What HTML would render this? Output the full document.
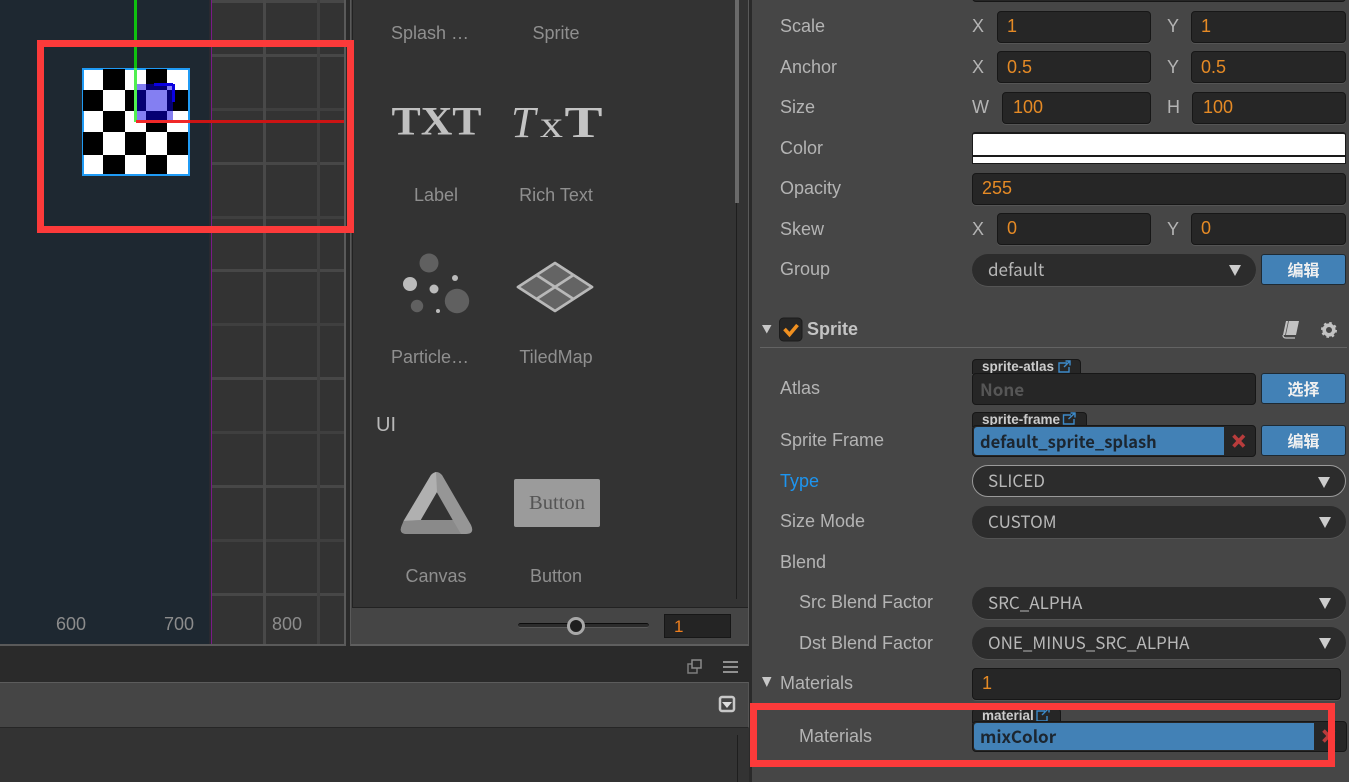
<!DOCTYPE html>
<html><head><meta charset="utf-8"><style>
*{box-sizing:border-box}
html,body{margin:0;padding:0;width:1349px;height:782px;overflow:hidden;background:#2a2a2a;font-family:"Liberation Sans","Noto Sans CJK SC",sans-serif}
#r{position:relative;width:1349px;height:782px;overflow:hidden}
.a{position:absolute}
.l{position:absolute;font-size:18px;line-height:24px;color:#b4b4b4;white-space:nowrap}
.c{position:absolute;font-size:18px;line-height:24px;color:#8f8f8f;white-space:nowrap;text-align:center;width:120px}
.i{position:absolute;background:#262626;border:1px solid #171717;border-radius:4px;height:32px;color:#e58a25;font-size:18px;line-height:29px;padding-left:9px;box-shadow:0 1px 0 #555}
.s{position:absolute;left:972px;width:374px;height:32px;background:#2c2c2c;border-radius:16px;color:#b8b8b8;font:17px/30px "Noto Sans CJK SC",sans-serif;padding-left:16px;box-shadow:0 1px 0 #555}
.s:after{content:"";position:absolute;right:15px;top:11px;border-left:6px solid transparent;border-right:6px solid transparent;border-top:11px solid #ccc}
.b{position:absolute;left:1261px;width:85px;background:#4281b6;border:1px solid #1e2a33;border-radius:3px;color:#f0f0f0;font-size:16px;font-weight:bold;text-align:center;line-height:33px;height:32px}
.tab{position:absolute;left:972px;background:#262626;border:1px solid #171717;border-bottom:none;border-radius:4px 4px 0 0;height:15px;color:#ccc;font-size:13.5px;font-weight:bold;line-height:14px;padding-left:9px;white-space:nowrap}
.f{position:absolute;left:972px;background:#262626;border:1px solid #171717;border-radius:4px;height:32px}
.bl{position:absolute;left:1px;top:1px;bottom:1px;background:#4281b6;color:#1c2630;font:bold 16.5px/29px "Noto Sans CJK SC",sans-serif;padding-left:6px;border-radius:3px 0 0 3px;white-space:nowrap}
.gh{position:absolute;left:212px;width:132px;height:3px;background:#474747}
.gh.d{background:#3f3f3f}
.gv{position:absolute;top:0;height:644px;width:3px;background:#494949}
.ck{position:absolute;width:22px;height:21px;background:#000}
</style></head><body><div id="r">

<!-- scene -->
<div class="a" style="left:0;top:0;width:346px;height:646px;background:#333"></div>
<div class="a" style="left:0;top:0;width:209px;height:644px;background:#1e2831"></div>
<div class="a" style="left:209px;top:0;width:2px;height:644px;background:#2a2a30"></div>
<div class="gh" style="top:0"></div><div class="gh" style="top:54px"></div><div class="gh d" style="top:108px"></div><div class="gh" style="top:162px"></div><div class="gh d" style="top:216px"></div><div class="gh" style="top:269px"></div><div class="gh d" style="top:323px"></div><div class="gh" style="top:377px"></div><div class="gh d" style="top:431px"></div><div class="gh" style="top:485px"></div><div class="gh d" style="top:539px"></div><div class="gh" style="top:593px"></div>
<div class="gv" style="left:263px"></div><div class="gv" style="left:317px;background:#404040"></div>
<div class="a" style="left:211px;top:0;width:1px;height:644px;background:#7a1a86"></div>
<div class="a" style="left:344px;top:0;width:2px;height:646px;background:#5a5a5a"></div>
<div class="a" style="left:346px;top:0;width:4px;height:646px;background:#2a2a2a"></div>
<div class="a" style="left:0;top:644px;width:346px;height:2px;background:#5a5a5a"></div>
<div class="c" style="left:11px;top:612px;color:#8c8c8c">600</div>
<div class="c" style="left:119px;top:612px;color:#8c8c8c">700</div>
<div class="c" style="left:227px;top:612px;color:#8c8c8c">800</div>

<!-- sprite -->
<div class="a" style="left:82px;top:68px;width:108px;height:108px;background:#fff;border:2px solid #1f9bf5"></div>
<div class="ck" style="left:103px;top:69px"></div><div class="ck" style="left:146px;top:69px;width:21px"></div>
<div class="ck" style="left:83px;top:90px;width:20px"></div><div class="ck" style="left:125px;top:90px;width:21px"></div><div class="ck" style="left:167px;top:90px;width:21px"></div>
<div class="ck" style="left:103px;top:111px"></div><div class="ck" style="left:146px;top:111px;width:21px"></div>
<div class="ck" style="left:83px;top:132px;height:23px;width:20px"></div><div class="ck" style="left:125px;top:132px;height:23px;width:21px"></div><div class="ck" style="left:167px;top:132px;height:23px;width:21px"></div>
<div class="ck" style="left:103px;top:155px;height:19px"></div><div class="ck" style="left:146px;top:155px;height:19px;width:21px"></div>
<div class="a" style="left:136px;top:84px;width:37px;height:38px;background:rgba(10,0,230,.5)"></div>
<div class="a" style="left:154px;top:83px;width:19px;height:3px;background:#0a00e0"></div>
<div class="a" style="left:172px;top:84px;width:3px;height:18px;background:#0a00e0"></div>
<div class="a" style="left:134px;top:0;width:3px;height:122px;background:#0fc00f"></div>
<div class="a" style="left:134px;top:68px;width:3px;height:54px;background:#50f050"></div>
<div class="a" style="left:136px;top:120px;width:208px;height:3px;background:#cc1414"></div>
<div class="a" style="left:136px;top:120px;width:54px;height:3px;background:#f02828"></div>

<!-- assets panel -->
<div class="a" style="left:350px;top:0;width:399px;height:646px;background:#454545;border-left:1px solid #5a5a5a;border-right:1px solid #5a5a5a;border-bottom:2px solid #5f5f5f"></div>
<div class="a" style="left:352px;top:0;width:396px;height:608px;background:#333;border-left:1px solid #222;border-bottom:1px solid #222"></div>
<div class="a" style="left:736px;top:0;width:1px;height:599px;background:#1e1e1e"></div>
<div class="a" style="left:735px;top:0;width:4px;height:203px;background:#6a6a6a"></div>
<div class="a" style="left:37px;top:40px;width:317px;height:193px;border:7px solid #fc3a3a"></div>

<div class="c" style="left:370px;top:21px">Splash …</div>
<div class="c" style="left:496px;top:21px">Sprite</div>
<div class="c" style="left:376px;top:183px">Label</div>
<div class="c" style="left:496px;top:183px">Rich Text</div>
<div class="c" style="left:370px;top:345px">Particle…</div>
<div class="c" style="left:496px;top:345px">TiledMap</div>
<div class="l" style="left:376px;top:413px;font-size:20px;color:#b8b8b8">UI</div>
<div class="c" style="left:376px;top:564px">Canvas</div>
<div class="c" style="left:496px;top:564px">Button</div>

<svg class="a" style="left:352px;top:0" width="396" height="600" viewBox="352 0 396 600">
<text x="391.500" y="134.500" font-family="Liberation Serif,serif" font-weight="bold" font-size="40" fill="#c0c0c0" textLength="90" lengthAdjust="spacingAndGlyphs">TXT</text>
<text x="511" y="137" font-family="Liberation Serif,serif" font-style="italic" font-size="44" fill="#c4c4c4">T</text>
<text x="540" y="137" font-family="Liberation Serif,serif" font-size="38" fill="#c4c4c4" textLength="23" lengthAdjust="spacingAndGlyphs">x</text>
<text x="564.500" y="137" font-family="Liberation Serif,serif" font-weight="bold" font-size="44" fill="#c4c4c4" textLength="38" lengthAdjust="spacingAndGlyphs">T</text>
<circle cx="429" cy="263" r="9.500" fill="#606060"/><circle cx="410" cy="284" r="7" fill="#bbb"/><circle cx="434" cy="289" r="4.500" fill="#bbb"/><circle cx="455" cy="278" r="3" fill="#bbb"/><circle cx="457" cy="301" r="12.200" fill="#606060"/><circle cx="417" cy="306" r="6.200" fill="#606060"/><circle cx="438" cy="311" r="2" fill="#bbb"/>
<path d="M555 263L592 287L555 311L518 287Z" fill="#646464" stroke="#b8b8b8" stroke-width="2.800" stroke-linejoin="round"/>
<path d="M536.500 275L573.500 299M573.500 275L536.500 299" stroke="#b8b8b8" stroke-width="2.800"/>
<path fill-rule="evenodd" d="M431 475Q436.500 469 442 475L471 525Q475 534 466 534H407Q398 534 402 525ZM436.700 492L420.700 520H452.700Z" fill="#969696"/>
<path d="M431 475Q433 473 436 472L437 492L420.700 520L403.500 521Z" fill="#b0b0b0"/>
<path d="M403.500 521L420.700 520H452.700L461 534H407Q398 534 402 525Z" fill="#8a8a8a"/>
<rect x="514" y="479" width="86" height="48" rx="2" fill="#9b9b9b"/>
<text x="557" y="509" text-anchor="middle" font-family="Liberation Serif,serif" font-size="20" fill="#555" textLength="56" lengthAdjust="spacingAndGlyphs">Button</text>
</svg>

<div class="a" style="left:518px;top:623px;width:131px;height:5px;background:#2b2b2b;border-top:1px solid #0c0c0c;border-bottom:1px solid #5a5a5a;border-radius:3px"></div>
<div class="a" style="left:567px;top:617px;width:18px;height:18px;border-radius:50%;background:#1f1f1f;border:3px solid #a8a8a8"></div>
<div class="i" style="left:664px;top:614px;width:67px;height:24px;line-height:24px;border-radius:0;background:#242424;font-size:17px;color:#ef7f1e;box-shadow:none">1</div>

<!-- bottom -->
<div class="a" style="left:0;top:682px;width:749px;height:46px;background:#454545;border-top:1px solid #5c5c5c;border-bottom:1px solid #262626;border-right:1px solid #555"></div>
<div class="a" style="left:0;top:728px;width:749px;height:54px;background:#333"></div>
<div class="a" style="left:737px;top:735px;width:1px;height:47px;background:#1e1e1e"></div>
<svg class="a" style="left:685px;top:657px" width="60" height="60" viewBox="685 657 60 60">
<rect x="688" y="664" width="9" height="9" fill="none" stroke="#7d7d7d" stroke-width="1.500"/><rect x="692" y="660" width="9" height="8" fill="#2a2a2a" stroke="#8a8a8a" stroke-width="1.500"/>
<path d="M723 662H738M723 667H738M723 672H738" stroke="#909090" stroke-width="2"/>
<rect x="720" y="697" width="14" height="14" rx="2" fill="#444" stroke="#c8c8c8" stroke-width="2.500"/><path d="M722 702H732L727 708Z" fill="#ddd"/>
</svg>

<!-- inspector -->
<div class="a" style="left:750px;top:0;width:599px;height:782px;background:#464646;border-left:2px solid #2a2a2a"></div>
<div class="a" style="left:972px;top:-30px;width:374px;height:32px;background:#262626;border:1px solid #171717;border-radius:4px"></div>

<div class="l" style="left:780px;top:14px">Scale</div>
<div class="l" style="left:780px;top:55px">Anchor</div>
<div class="l" style="left:780px;top:95px">Size</div>
<div class="l" style="left:780px;top:136px">Color</div>
<div class="l" style="left:780px;top:176px">Opacity</div>
<div class="l" style="left:780px;top:217px">Skew</div>
<div class="l" style="left:780px;top:257px">Group</div>

<div class="l" style="left:972px;top:14px">X</div><div class="l" style="left:1167px;top:14px">Y</div>
<div class="l" style="left:972px;top:55px">X</div><div class="l" style="left:1167px;top:55px">Y</div>
<div class="l" style="left:972px;top:95px">W</div><div class="l" style="left:1167px;top:95px">H</div>
<div class="l" style="left:972px;top:217px">X</div><div class="l" style="left:1167px;top:217px">Y</div>

<div class="i" style="left:997px;top:11px;width:154px">1</div><div class="i" style="left:1191px;top:11px;width:155px">1</div>
<div class="i" style="left:997px;top:51px;width:154px;line-height:30px">0.5</div><div class="i" style="left:1191px;top:51px;width:155px;line-height:30px">0.5</div>
<div class="i" style="left:1002px;top:92px;width:149px;padding-left:10px">100</div><div class="i" style="left:1192px;top:92px;width:154px;padding-left:10px">100</div>
<div class="a" style="left:972px;top:132px;width:374px;height:32px;background:#fff;border:1px solid #1a1a1a;border-radius:3px 3px 0 0;border-width:2px 1px 1px"><div class="a" style="left:0;right:0;top:21px;height:2px;background:#1a1a1a"></div></div>
<div class="i" style="left:972px;top:173px;width:374px">255</div>
<div class="i" style="left:997px;top:213px;width:154px">0</div><div class="i" style="left:1191px;top:213px;width:155px">0</div>
<div class="s" style="top:254px;width:284px">default</div>
<div class="b" style="top:254px;height:31px">编辑</div>

<!-- sprite header -->
<svg class="a" style="left:760px;top:315px" width="50" height="30" viewBox="760 315 50 30">
<path d="M762 325H771.500L766.800 333.500Z" fill="#c8c8c8"/>
<rect x="779.500" y="318" width="22.500" height="23" rx="4" fill="#262626" stroke="#1c1c1c"/>
<path d="M784.500 329L789.500 334.500L797.500 325" fill="none" stroke="#f09020" stroke-width="3.600"/>
</svg>
<div class="l" style="left:807px;top:317px;font-weight:bold;color:#c4c4c4">Sprite</div>
<svg class="a" style="left:1280px;top:318px" width="60" height="24" viewBox="1280 318 60 24">
<path d="M1286 321H1299L1296 335H1283Z" fill="#c2c2c2"/><path d="M1288.500 321L1285.500 335" stroke="#555" stroke-width=".8"/><path d="M1283 335Q1283 338 1286 338H1295" fill="none" stroke="#c2c2c2" stroke-width="1.200"/>
<circle cx="1329" cy="330" r="4.800" fill="none" stroke="#c2c2c2" stroke-width="3.600"/><circle cx="1329" cy="330" r="7" fill="none" stroke="#c2c2c2" stroke-width="2" stroke-dasharray="2.600 2.900"/>
</svg>
<div class="a" style="left:760px;top:347px;width:587px;height:1px;background:#636363"></div>

<!-- atlas -->
<div class="l" style="left:780px;top:376px">Atlas</div>
<div class="tab" style="top:359px;width:109px">sprite-atlas</div>
<div class="f" style="top:373px;width:284px"><span class="a" style="left:7px;top:0;font:bold 17px/29px 'Noto Sans CJK SC',sans-serif;color:#565656">None</span></div>
<div class="b" style="top:373px;height:31px">选择</div>

<div class="l" style="left:780px;top:428px">Sprite Frame</div>
<div class="tab" style="top:412px;width:115px">sprite-frame</div>
<div class="f" style="top:425px;width:284px"><div class="bl" style="width:250px">default_sprite_splash</div></div>
<svg class="a" style="left:1230px;top:433px" width="18" height="16" viewBox="0 0 18 16"><path d="M3.500 2.500L14 13.500M14 2.500L3.500 13.500" stroke="#b83c3c" stroke-width="3.600"/></svg>
<div class="b" style="top:425px;height:31px">编辑</div>

<svg class="a" style="left:1055px;top:359px" width="40" height="70" viewBox="1055 359 40 70">
<path d="M1067 363H1059V372H1069V367M1064 367L1070 361M1065.500 361H1070V365.500" fill="none" stroke="#3d8ac9" stroke-width="1.400"/>
<path d="M1071 415H1063.500V424H1074V419M1068.500 419L1075 413M1070.500 413H1075V417.500" fill="none" stroke="#3d8ac9" stroke-width="1.400"/>
</svg>

<div class="l" style="left:780px;top:469px;color:#1d95f0">Type</div>
<div class="s" style="top:465px;border:1px solid #9a9a9a;line-height:28px;padding-left:15px;box-shadow:none">SLICED</div>
<div class="l" style="left:780px;top:509px">Size Mode</div>
<div class="s" style="top:506px">CUSTOM</div>
<div class="l" style="left:780px;top:550px">Blend</div>
<div class="l" style="left:799px;top:590px">Src Blend Factor</div>
<div class="s" style="top:587px">SRC_ALPHA</div>
<div class="l" style="left:799px;top:631px">Dst Blend Factor</div>
<div class="s" style="top:627px">ONE_MINUS_SRC_ALPHA</div>

<svg class="a" style="left:760px;top:674px" width="16" height="16" viewBox="0 0 16 16"><path d="M2 3H11.500L6.800 13Z" fill="#c8c8c8"/></svg>
<div class="l" style="left:780px;top:671px">Materials</div>
<div class="i" style="left:972px;top:668px;width:369px">1</div>

<div class="l" style="left:799px;top:724px">Materials</div>
<div class="tab" style="top:708px;width:89px;height:15px">material</div>
<svg class="a" style="left:1035px;top:706px" width="20" height="16" viewBox="0 0 20 16"><path d="M10 5H2V15H12V10M7 9L14 2M9.500 2H14V6.500" fill="none" stroke="#3d8ac9" stroke-width="1.400"/></svg>
<div class="f" style="top:721px;width:375px;height:31px"><div class="bl" style="width:340px;font-size:17px;line-height:26px">mixColor</div></div>
<svg class="a" style="left:1320px;top:728px" width="18" height="16" viewBox="0 0 18 16"><path d="M3.500 2.500L14 13.500M14 2.500L3.500 13.500" stroke="#b83c3c" stroke-width="3.600"/></svg>
<div class="a" style="left:750px;top:703px;width:585px;height:64px;border:7px solid #fc3a3a"></div>

</div></body></html>
